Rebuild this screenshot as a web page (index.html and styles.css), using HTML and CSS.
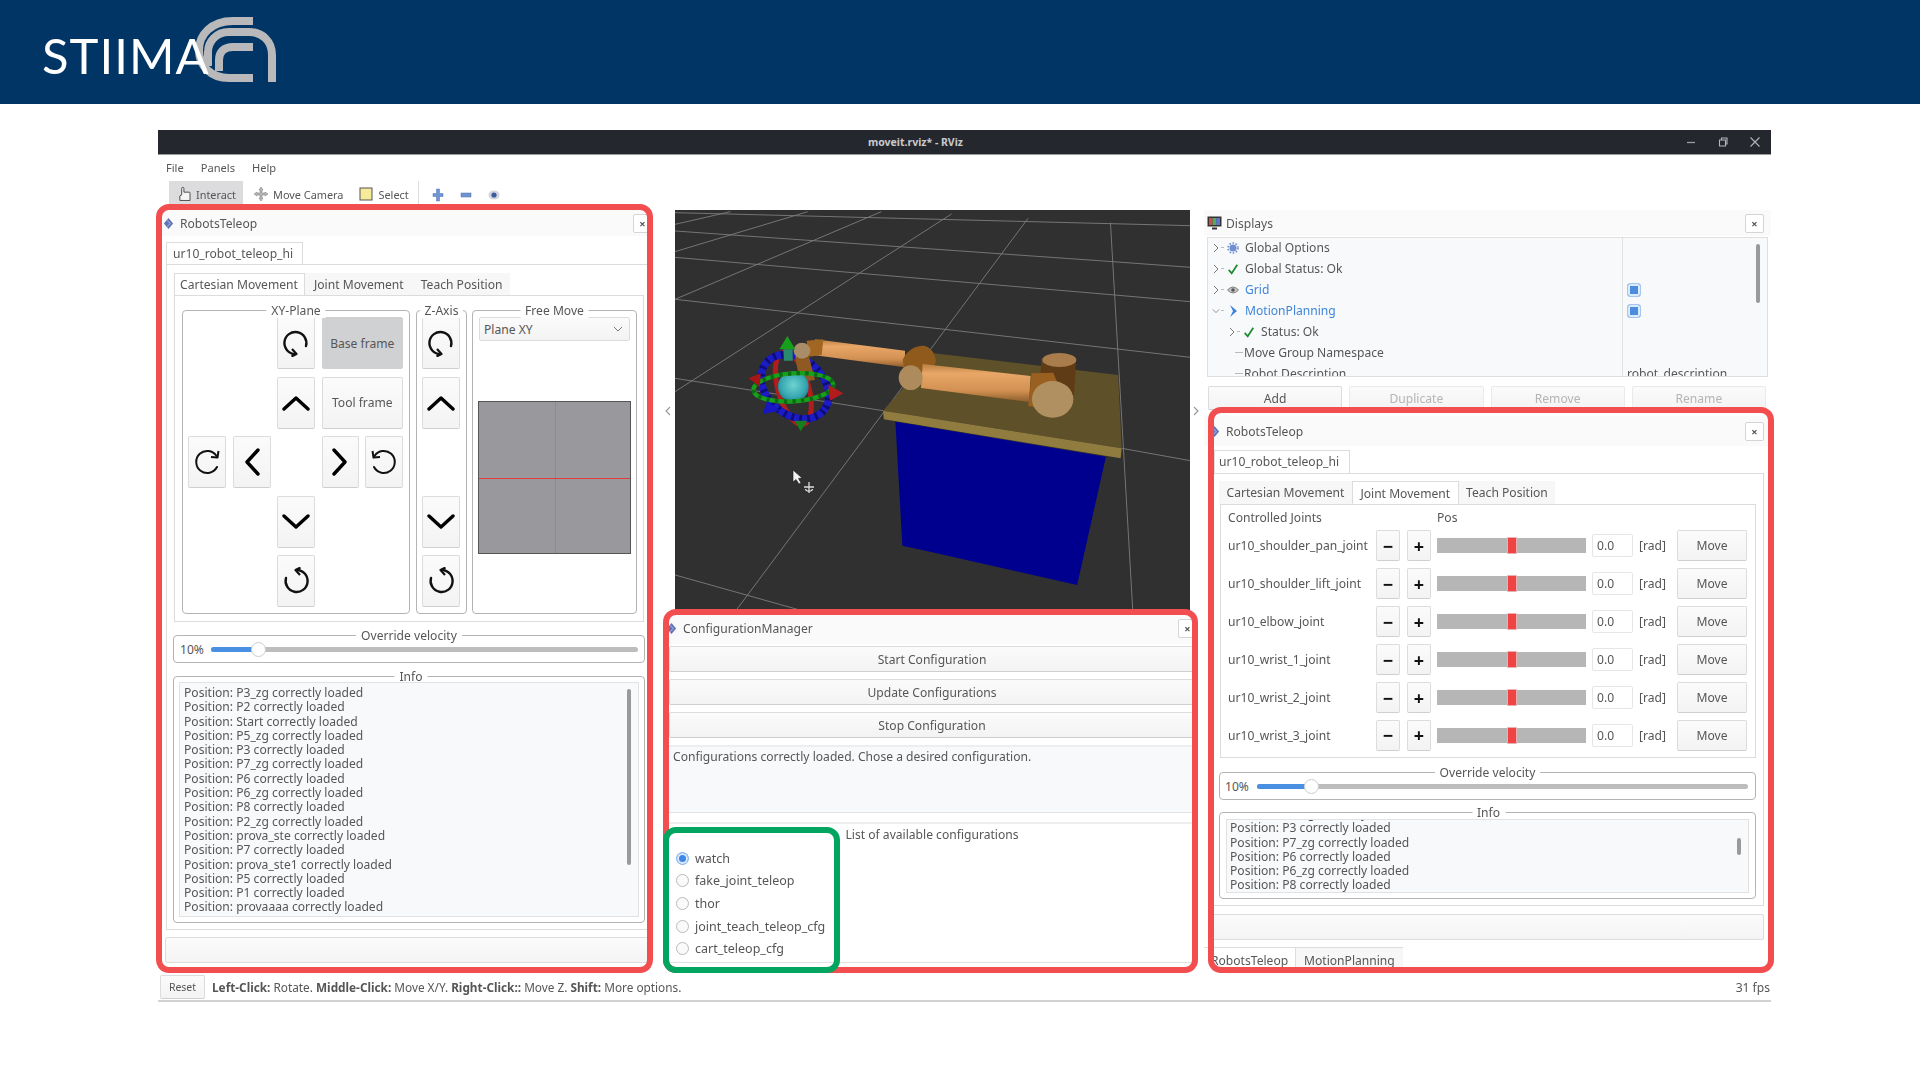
FILE: index.html
```html
<!DOCTYPE html>
<html lang="en">
<head>
<meta charset="utf-8">
<title>STIIMA - moveit.rviz - RViz</title>
<link rel="stylesheet" href="styles.css">
</head>
<body>
<svg class="defs" width="0" height="0" aria-hidden="true">
  <defs>
    <symbol id="chev" viewBox="0 0 28 16"><path d="M2 14 L14 3 L26 14" fill="none" stroke="#000" stroke-width="3.4" stroke-linecap="round" stroke-linejoin="round"/></symbol>
    <symbol id="rot-v" viewBox="0 0 28 28"><path d="M24 17 A11 11 0 1 0 13 25" fill="none" stroke="#111" stroke-width="2.4" stroke-linecap="round"/><path d="M10 20 L14.5 25 L9.5 27.5" fill="none" stroke="#111" stroke-width="2.2" stroke-linejoin="round"/></symbol>
    <symbol id="rot-h" viewBox="0 0 28 28"><path d="M24 19 A11 11 0 1 1 23.5 8" fill="none" stroke="#111" stroke-width="2" stroke-linecap="round"/><path d="M18 9 L24.5 9.5 L25.5 3" fill="none" stroke="#111" stroke-width="2" stroke-linejoin="round"/></symbol>
    <symbol id="tele" viewBox="0 0 12 14"><path d="M6 1 L11 7 L6 13 L1 7 Z" fill="#5f72b4"/><path d="M4 3 L8 7 L4 11" fill="none" stroke="#8f9fd6" stroke-width="1.4"/></symbol>
    <symbol id="exp-r" viewBox="0 0 8 10"><path d="M2 1 L6 5 L2 9" fill="none" stroke="#777" stroke-width="1"/></symbol>
    <symbol id="exp-d" viewBox="0 0 10 8"><path d="M1 2 L5 6 L9 2" fill="none" stroke="#777" stroke-width="1"/></symbol>
    <symbol id="check" viewBox="0 0 14 14"><path d="M2 8 L5.5 12 L12 2" fill="none" stroke="#1c8a2e" stroke-width="2"/></symbol>
  </defs>
</svg>

<header class="banner">
  <div class="logo">
    <span class="logo-text">STIIMA</span>
    <svg class="logo-mark" width="90" height="72" viewBox="190 14 90 72">
      <g fill="none" stroke="#b9b9bb" stroke-width="8">
        <path d="M253 21 H233 C211 21 199 35 199 50 C199 66 211 78 229 78 H253"/>
        <path d="M272 82 V55 C272 41 262 32 249 32 H229 C216 32 208 42 208 52 V66"/>
        <path d="M253 47 H233 C224 47 219 52 219 60 V71"/>
      </g>
    </svg>
  </div>
</header>

<main class="page">
  <div class="stage">
    <div class="window">
      <div class="titlebar">
        <span class="title-text">moveit.rviz* - RViz</span>
        <div class="win-controls">
          <svg width="12" height="12" viewBox="0 0 12 12"><path d="M2 6.5 H10" stroke="#9a9ca2" stroke-width="1.3"/></svg>
          <svg width="12" height="12" viewBox="0 0 12 12"><path d="M2.5 4 H8.5 V10 H2.5 Z M4.5 4 V2 H10 V8 H8.5" fill="none" stroke="#b5b6ba" stroke-width="1.1"/></svg>
          <svg width="12" height="12" viewBox="0 0 12 12"><path d="M1.5 1.5 L10.5 10.5 M10.5 1.5 L1.5 10.5" stroke="#b5b6ba" stroke-width="1.1"/></svg>
        </div>
      </div>
      <nav class="menubar"><span>File</span><span>Panels</span><span>Help</span></nav>
      <div class="toolbar">
        <div class="tool tool-active">
          <svg width="14" height="16" viewBox="0 0 14 16"><path d="M4 9 V2 a1.2 1.2 0 0 1 2.4 0 V6 H12 a1 1 0 0 1 1 1 V15 H2 V10 Z" fill="#f4f4f4" stroke="#444" stroke-width="1"/></svg>
          <span>Interact</span>
        </div>
        <div class="tool">
          <svg width="14" height="16" viewBox="0 0 14 16"><path d="M7 1 L9 4 H8 V7 H11 V6 L14 8 L11 10 V9 H8 V12 H9 L7 15 L5 12 H6 V9 H3 V10 L0 8 L3 6 V7 H6 V4 H5 Z" fill="#b8b8b8" stroke="#777" stroke-width=".5"/></svg>
          <span>Move Camera</span>
        </div>
        <div class="tool">
          <svg width="14" height="14" viewBox="0 0 14 14"><rect x="1" y="1" width="12" height="12" fill="#f7eb9a" stroke="#555" stroke-width="1"/></svg>
          <span>Select</span>
        </div>
        <div class="tool-sep"></div>
        <svg class="tool-icon" width="12" height="14" viewBox="0 0 12 14"><path d="M4.5 1 H7.5 V5.5 H11 V8.5 H7.5 V13 H4.5 V8.5 H1 V5.5 H4.5 Z" fill="#6f94d2" stroke="#4f70ad" stroke-width=".5"/></svg>
        <svg class="tool-icon" width="12" height="14" viewBox="0 0 12 14"><rect x="1" y="5" width="10" height="4" fill="#6f94d2" stroke="#4f70ad" stroke-width=".5"/></svg>
        <svg class="tool-icon" width="12" height="14" viewBox="0 0 12 14"><ellipse cx="6" cy="7" rx="5.5" ry="4.5" fill="#d4d6dc"/><circle cx="6" cy="7" r="2.6" fill="#3d5da0"/></svg>
      </div>

      <div class="main">
        <!-- Left dock -->
        <section class="dock-left">
          <div class="dock-title">
            <svg class="dock-icon" width="11" height="13"><use href="#tele"/></svg>
            <span>RobotsTeleop</span>
            <button class="close-btn">×</button>
          </div>
          <div class="tabbar tabbar-left"><div class="outer-tab">ur10_robot_teleop_hi</div></div>
          <div class="tab-pane tab-pane-left">
            <div class="inner-tabs inner-tabs-left">
              <div class="inner-tab active">Cartesian Movement</div>
              <div class="inner-tab">Joint Movement</div>
              <div class="inner-tab">Teach Position</div>
            </div>
            <div class="inner-pane cart-pane">
              <div class="group xy-group">
                <span class="legend">XY-Plane</span>
                <div class="pad-grid">
                  <button class="btn pad c3 r1"><svg width="28" height="28"><use href="#rot-v"/></svg></button>
                  <button class="btn pad frame-on c45 r1">Base frame</button>
                  <button class="btn pad c3 r2"><svg width="28" height="16"><use href="#chev"/></svg></button>
                  <button class="btn pad c45 r2">Tool frame</button>
                  <button class="btn pad c1 r3"><svg width="28" height="28"><use href="#rot-h"/></svg></button>
                  <button class="btn pad c2 r3"><svg class="point-left" width="28" height="16"><use href="#chev"/></svg></button>
                  <button class="btn pad c4 r3"><svg class="point-right" width="28" height="16"><use href="#chev"/></svg></button>
                  <button class="btn pad c5 r3"><svg class="flip-x" width="28" height="28"><use href="#rot-h"/></svg></button>
                  <button class="btn pad c3 r4"><svg class="flip-y" width="28" height="16"><use href="#chev"/></svg></button>
                  <button class="btn pad c3 r5"><svg class="turn" width="28" height="28"><use href="#rot-v"/></svg></button>
                </div>
              </div>
              <div class="group z-group">
                <span class="legend">Z-Axis</span>
                <div class="z-grid">
                  <button class="btn pad r1"><svg width="28" height="28"><use href="#rot-v"/></svg></button>
                  <button class="btn pad r2"><svg width="28" height="16"><use href="#chev"/></svg></button>
                  <button class="btn pad r4"><svg class="flip-y" width="28" height="16"><use href="#chev"/></svg></button>
                  <button class="btn pad r5"><svg class="turn" width="28" height="28"><use href="#rot-v"/></svg></button>
                </div>
              </div>
              <div class="group free-group">
                <span class="legend">Free Move</span>
                <div class="combo"><span>Plane XY</span><svg width="10" height="8"><use href="#exp-d"/></svg></div>
                <div class="free-square"><i class="axis-v"></i><i class="axis-h"></i></div>
              </div>
            </div>
            <div class="group velocity velocity-left">
              <span class="legend">Override velocity</span>
              <span class="pct">10%</span>
              <div class="slider"><div class="slider-fill fill-left"></div><div class="slider-handle handle-left"></div></div>
            </div>
            <div class="group info info-left">
              <span class="legend">Info</span>
              <div class="log log-left">
                <div>Position: P3_zg correctly loaded</div>
                <div>Position: P2 correctly loaded</div>
                <div>Position: Start correctly loaded</div>
                <div>Position: P5_zg correctly loaded</div>
                <div>Position: P3 correctly loaded</div>
                <div>Position: P7_zg correctly loaded</div>
                <div>Position: P6 correctly loaded</div>
                <div>Position: P6_zg correctly loaded</div>
                <div>Position: P8 correctly loaded</div>
                <div>Position: P2_zg correctly loaded</div>
                <div>Position: prova_ste correctly loaded</div>
                <div>Position: P7 correctly loaded</div>
                <div>Position: prova_ste1 correctly loaded</div>
                <div>Position: P5 correctly loaded</div>
                <div>Position: P1 correctly loaded</div>
                <div>Position: provaaaa correctly loaded</div>
                <i class="vbar vbar-left"></i>
              </div>
            </div>
          </div>
          <div class="empty-bar empty-left"></div>
        </section>

        <!-- Centre -->
        <section class="center">
          <div class="view-row">
            <svg class="side-arrow" width="25" height="12" viewBox="0 0 25 12"><path d="M20 2 L16 6 L20 10" fill="none" stroke="#9a9a9a" stroke-width="1.2"/></svg>
            <svg class="view" width="515" height="402" viewBox="0 0 515 402">
              <defs>
                <linearGradient id="arm" x1="0" y1="0" x2="0" y2="1">
                  <stop offset="0" stop-color="#b97f42"/><stop offset=".25" stop-color="#e8a767"/><stop offset=".7" stop-color="#d29152"/><stop offset="1" stop-color="#8d5c2c"/>
                </linearGradient>
                <radialGradient id="ball" cx=".5" cy=".45" r=".6">
                  <stop offset="0" stop-color="#6fd3d0"/><stop offset=".7" stop-color="#34a5b0"/><stop offset="1" stop-color="#1c6f80"/>
                </radialGradient>
                <filter id="soft" x="-10%" y="-10%" width="120%" height="120%"><feGaussianBlur stdDeviation="2"/></filter>
              </defs>
              <rect width="515" height="402" fill="#303030"/>
              <g transform="scale(.3509 .3333) translate(-42 -30)">
                <g fill="none" stroke="#7d7d7d" stroke-width="2.6">
                  <path d="M42 38 L1510 77"/>
                  <path d="M42 93 L680 140 L1290 185 L1510 202"/>
                  <path d="M42 172 L570 220 L1295 285 L1510 305"/>
                  <path d="M42 298 L810 388 L1510 472"/>
                  <path d="M42 535 L635 632"/>
                  <path d="M1315 745 L1510 782"/>
                  <path d="M42 1125 L390 1228"/>
                  <path d="M1283 68 L1347 1240"/>
                  <path d="M1048 55 L210 1240"/>
                  <path d="M830 42 L42 575"/>
                  <path d="M630 35 L42 298"/>
                  <path d="M420 35 L42 155"/>
                  <path d="M200 35 L42 73"/>
                </g>
                <path d="M780 460 L1305 525 L1315 745 L635 632 Z" fill="#5e5029"/>
                <path d="M635 632 L1315 745 L1312 775 L637 658 Z" fill="#917c3f"/>
                <path d="M670 665 L1270 770 L1188 1155 L690 1037 Z" fill="#00008f"/>
              </g>
              <!-- shoulder side of the arm -->
              <g transform="translate(215 120) scale(.3333)" filter="url(#soft)">
                <path d="M-225 28 L45 62 L45 112 L-225 76 Z" fill="url(#arm)"/>
                <path d="M38 90 C50 60 80 45 105 48 C130 55 140 85 136 100 L100 145 L45 125 Z" fill="#8f5a1e"/>
                <path d="M98 102 L422 138 L417 216 L93 174 Z" fill="url(#arm)"/>
                <ellipse cx="62" cy="143" rx="36" ry="37" fill="#ad8b5c"/>
                <path d="M454 85 L558 95 L552 195 L500 200 L452 130 Z" fill="#5f3a12"/>
                <ellipse cx="508" cy="90" rx="51" ry="21" fill="#a97d4c"/>
                <path d="M425 130 L490 128 L505 165 L465 234 L415 228 Z" fill="#9a6020"/>
                <ellipse cx="488" cy="208" rx="62" ry="55" fill="#b09061"/>
              </g>
              <!-- goal marker -->
              <g transform="translate(65 120) scale(.3333)" filter="url(#soft)">
                <path d="M200 32 L250 28 L245 75 L205 80 Z" fill="#a16622"/>
                <ellipse cx="160" cy="175" rx="112" ry="46" transform="rotate(74 160 175)" fill="none" stroke="#b31d1d" stroke-width="15"/>
                <ellipse cx="165" cy="170" rx="112" ry="84" transform="rotate(40 165 170)" fill="none" stroke="#1a1ac4" stroke-width="22"/>
                <ellipse cx="165" cy="170" rx="112" ry="84" transform="rotate(40 165 170)" fill="none" stroke="#0d0d7a" stroke-width="22" stroke-dasharray="8 16"/>
                <path d="M165 80 L205 72 L225 150 L180 155 Z" fill="#8f5a20"/>
                <ellipse cx="186" cy="62" rx="25" ry="24" fill="#a98d68"/>
                <circle cx="160" cy="170" r="46" fill="url(#ball)"/>
                <ellipse cx="160" cy="172" rx="120" ry="42" transform="rotate(-4 160 172)" fill="none" stroke="#17a01b" stroke-width="13"/>
                <ellipse cx="160" cy="172" rx="120" ry="42" transform="rotate(-4 160 172)" fill="none" stroke="#0d6a12" stroke-width="13" stroke-dasharray="10 16"/>
                <path d="M142 18 L166 58 L118 58 Z" fill="#14a01a"/>
                <path d="M130 58 L158 58 L158 92 L132 92 Z" fill="#2b8a70"/>
                <path d="M25 145 L62 130 L60 170 Z" fill="#a51616"/>
                <path d="M310 190 L265 165 L270 212 Z" fill="#b31d1d"/>
                <path d="M68 252 L82 212 L118 242 Z" fill="#1616c4"/>
                <path d="M182 304 L164 272 L202 272 Z" fill="#14801a"/>
              </g>
              <!-- mouse cursor -->
              <g transform="translate(118 260)">
                <path d="M0 0 V12 L3 9.5 L6 14 L8 13 L5.5 8.5 L9 8 Z" fill="#f2f2f2" stroke="#1a1a1a" stroke-width=".6"/>
                <path d="M11 17 H21 M16 12 V23 M12.5 19 C13 22 19 22 19.500 19" fill="none" stroke="#dcdcdc" stroke-width="1.3"/>
              </g>
            </svg>
            <svg class="side-arrow" width="14" height="12" viewBox="0 0 14 12"><path d="M4 2 L8 6 L4 10" fill="none" stroke="#9a9a9a" stroke-width="1.2"/></svg>
          </div>
          <div class="config">
            <div class="dock-title config-title">
              <svg class="dock-icon" width="11" height="13"><use href="#tele"/></svg>
              <span>ConfigurationManager</span>
              <button class="close-btn">×</button>
            </div>
            <button class="btn wide">Start Configuration</button>
            <button class="btn wide">Update Configurations</button>
            <button class="btn wide">Stop Configuration</button>
            <div class="config-log">Configurations correctly loaded. Chose a desired configuration.</div>
            <div class="config-list">
              <div class="config-head">List of available configurations</div>
              <div class="radio-list">
                <label class="radio-row"><i class="radio on"></i>watch</label>
                <label class="radio-row"><i class="radio"></i>fake_joint_teleop</label>
                <label class="radio-row"><i class="radio"></i>thor</label>
                <label class="radio-row"><i class="radio"></i>joint_teach_teleop_cfg</label>
                <label class="radio-row"><i class="radio"></i>cart_teleop_cfg</label>
              </div>
            </div>
          </div>
        </section>

        <!-- Right dock -->
        <section class="dock-right">
          <div class="dock-title displays-title">
            <svg class="dock-icon displays-icon" width="15" height="14" viewBox="0 0 15 14"><rect x=".5" y=".5" width="14" height="10" fill="#333"/><rect x="2" y="2" width="3.6" height="7" fill="#c94f4f"/><rect x="5.6" y="2" width="3.6" height="7" fill="#56a85a"/><rect x="9.2" y="2" width="3.8" height="7" fill="#5a78c8"/><path d="M5 12.5 H10" stroke="#333" stroke-width="2"/></svg>
            <span>Displays</span>
            <button class="close-btn">×</button>
          </div>
          <div class="tree">
            <div class="tree-row">
              <div class="tree-name"><svg class="exp" width="8" height="10"><use href="#exp-r"/></svg><i class="dash"></i><svg class="ticon" width="12" height="12" viewBox="0 0 12 12"><circle cx="6" cy="6" r="3.6" fill="#6f8fd0"/><circle cx="6" cy="6" r="5" fill="none" stroke="#6f8fd0" stroke-width="1.6" stroke-dasharray="1.6 1.6"/></svg><span>Global Options</span></div>
            </div>
            <div class="tree-row">
              <div class="tree-name"><svg class="exp" width="8" height="10"><use href="#exp-r"/></svg><i class="dash"></i><svg class="ticon" width="12" height="12"><use href="#check"/></svg><span>Global Status: Ok</span></div>
            </div>
            <div class="tree-row">
              <div class="tree-name"><svg class="exp" width="8" height="10"><use href="#exp-r"/></svg><i class="dash"></i><svg class="ticon" width="12" height="10" viewBox="0 0 12 10"><path d="M.5 5 Q6 -1 11.5 5 Q6 11 .5 5 Z" fill="#c9c9c9" stroke="#666" stroke-width=".8"/><circle cx="6" cy="5" r="1.8" fill="#555"/></svg><span class="link">Grid</span></div>
              <div class="tree-val"><i class="tick"></i></div>
            </div>
            <div class="tree-row">
              <div class="tree-name"><svg class="exp" width="8" height="8"><use href="#exp-d"/></svg><i class="dash"></i><svg class="ticon" width="12" height="14" viewBox="0 0 12 14"><path d="M3 1 L10 7 L3 13 L6 7 Z" fill="#3f80d8"/></svg><span class="link">MotionPlanning</span></div>
              <div class="tree-val"><i class="tick"></i></div>
            </div>
            <div class="tree-row">
              <div class="tree-name lvl2"><svg class="exp" width="8" height="10"><use href="#exp-r"/></svg><i class="dash"></i><svg class="ticon" width="12" height="12"><use href="#check"/></svg><span>Status: Ok</span></div>
            </div>
            <div class="tree-row">
              <div class="tree-name lvl2b"><i class="dash dash-leaf"></i><span>Move Group Namespace</span></div>
            </div>
            <div class="tree-row">
              <div class="tree-name lvl2b"><i class="dash dash-leaf"></i><span>Robot Description</span></div>
              <div class="tree-val"><span>robot_description</span></div>
            </div>
            <i class="vbar vbar-tree"></i>
          </div>
          <div class="display-btns">
            <button class="btn dbtn">Add</button>
            <button class="btn dbtn off">Duplicate</button>
            <button class="btn dbtn off">Remove</button>
            <button class="btn dbtn off">Rename</button>
          </div>

          <div class="dock-title teleop-title">
            <svg class="dock-icon" width="11" height="13"><use href="#tele"/></svg>
            <span>RobotsTeleop</span>
            <button class="close-btn">×</button>
          </div>
          <div class="tabbar tabbar-right"><div class="outer-tab">ur10_robot_teleop_hi</div></div>
          <div class="tab-pane tab-pane-right">
            <div class="inner-tabs inner-tabs-right">
              <div class="inner-tab">Cartesian Movement</div>
              <div class="inner-tab active">Joint Movement</div>
              <div class="inner-tab">Teach Position</div>
            </div>
            <div class="inner-pane joint-pane">
              <div class="joint-head"><span class="jh-name">Controlled Joints</span><span>Pos</span></div>
              <div class="joint-row"><span class="j-name">ur10_shoulder_pan_joint</span><button class="btn j-step">−</button><button class="btn j-step">+</button><div class="j-slider"><i></i></div><div class="j-val">0.0</div><span class="j-unit">[rad]</span><button class="btn j-move">Move</button></div>
              <div class="joint-row"><span class="j-name">ur10_shoulder_lift_joint</span><button class="btn j-step">−</button><button class="btn j-step">+</button><div class="j-slider"><i></i></div><div class="j-val">0.0</div><span class="j-unit">[rad]</span><button class="btn j-move">Move</button></div>
              <div class="joint-row"><span class="j-name">ur10_elbow_joint</span><button class="btn j-step">−</button><button class="btn j-step">+</button><div class="j-slider"><i></i></div><div class="j-val">0.0</div><span class="j-unit">[rad]</span><button class="btn j-move">Move</button></div>
              <div class="joint-row"><span class="j-name">ur10_wrist_1_joint</span><button class="btn j-step">−</button><button class="btn j-step">+</button><div class="j-slider"><i></i></div><div class="j-val">0.0</div><span class="j-unit">[rad]</span><button class="btn j-move">Move</button></div>
              <div class="joint-row"><span class="j-name">ur10_wrist_2_joint</span><button class="btn j-step">−</button><button class="btn j-step">+</button><div class="j-slider"><i></i></div><div class="j-val">0.0</div><span class="j-unit">[rad]</span><button class="btn j-move">Move</button></div>
              <div class="joint-row"><span class="j-name">ur10_wrist_3_joint</span><button class="btn j-step">−</button><button class="btn j-step">+</button><div class="j-slider"><i></i></div><div class="j-val">0.0</div><span class="j-unit">[rad]</span><button class="btn j-move">Move</button></div>
            </div>
            <div class="group velocity velocity-right">
              <span class="legend">Override velocity</span>
              <span class="pct">10%</span>
              <div class="slider"><div class="slider-fill fill-right"></div><div class="slider-handle handle-right"></div></div>
            </div>
            <div class="group info info-right">
              <span class="legend">Info</span>
              <div class="log log-right">
                <div class="clipped">Position: P5_zg correctly loaded</div>
                <div>Position: P3 correctly loaded</div>
                <div>Position: P7_zg correctly loaded</div>
                <div>Position: P6 correctly loaded</div>
                <div>Position: P6_zg correctly loaded</div>
                <div>Position: P8 correctly loaded</div>
                <i class="vbar vbar-right"></i>
              </div>
            </div>
          </div>
          <div class="empty-bar empty-right"></div>
          <div class="bottom-tabs">
            <div class="bottom-tab first">RobotsTeleop</div>
            <div class="bottom-tab">MotionPlanning</div>
          </div>
        </section>
      </div>

      <footer class="statusbar">
        <button class="btn reset">Reset</button>
        <span class="hint"><b>Left-Click:</b> Rotate. <b>Middle-Click:</b> Move X/Y. <b>Right-Click::</b> Move Z. <b>Shift:</b> More options.</span>
        <span class="fps">31 fps</span>
      </footer>
    </div>

    <div class="mark mark-left"></div>
    <div class="mark mark-center"></div>
    <div class="mark mark-right"></div>
    <div class="mark mark-green"></div>
  </div>
</main>
</body>
</html>
```
FILE: styles.css
```css
* { box-sizing: border-box; }
html, body { margin: 0; padding: 0; background: #fff; }
body { width: 1920px; height: 1080px; overflow: hidden; font-family: "Noto Sans", "Open Sans", sans-serif; font-size: 12.1px; color: #565656; }
.defs { position: absolute; }
button { font: inherit; color: inherit; padding: 0; margin: 0; }

/* banner */
.banner { height: 104px; background: #003566; padding-left: 43px; }
.logo { position: relative; height: 104px; width: 240px; }
.logo-text { position: absolute; z-index: 2; left: -1px; top: 26px; font-family: Lato, sans-serif; font-size: 49px; line-height: 58px; color: #fff; letter-spacing: 1px; font-weight: 400; }
.logo-mark { position: absolute; left: 147px; top: 14px; }

/* window */
.page { padding: 26px 0 0 158px; }
.stage { position: relative; width: 1613px; }
.window { width: 1613px; filter: blur(.4px); }
.titlebar { height: 25px; background: #25272f; border-bottom: 1px solid #9a9a9a; display: flex; align-items: center; justify-content: center; position: relative; }
.title-text { color: #c9cacd; font-weight: 700; font-size: 10.5px; margin-left: -98px; }
.win-controls { position: absolute; right: 10px; top: 6px; display: flex; gap: 20px; }
.menubar { height: 25px; display: flex; align-items: center; padding-left: 8px; gap: 17px; font-size: 11.1px; }
.toolbar { height: 28px; display: flex; align-items: flex-start; padding-left: 11px; font-size: 10.9px; }
.tool { height: 24px; display: flex; align-items: center; gap: 5px; padding: 2px 7px 0 9px; margin-top: 1px; }
.tool-active { background: #dcdcde; width: 74px; margin-right: 2px; }
.tool + .tool { padding-left: 9px; }
.tool-sep { width: 1px; height: 24px; background: #ddd; margin: 1px 13px 0 2px; }
.tool-icon { margin: 8px 16px 0 0; }

.main { display: flex; height: 766px; padding: 2px 0 0 2px; }

/* docks */
.dock-title { height: 26px; display: flex; align-items: center; background: #fafafa; padding-left: 3px; gap: 6px; }
.dock-icon { flex: none; }
.close-btn { margin-left: auto; width: 19px; height: 19px; border: 1px solid #d5d5d5; background: #fff; border-radius: 2px; font-size: 11px; line-height: 15px; font-weight: 700; }

.dock-left { width: 490px; flex: none; }
.dock-left .close-btn { margin-right: -2px; }
.tabbar { display: flex; }
.tabbar-left { margin: 6px 0 0 6px; height: 22px; }
.outer-tab { border: 1px solid #dcdcdc; border-bottom: 0; background: #fff; display: flex; align-items: center; white-space: nowrap; }
.tabbar-left .outer-tab { width: 137px; padding-left: 6px; }
.tab-pane { border: 1px solid #dcdcdc; background: #fff; }
.tab-pane-left { margin-left: 6px; height: 666px; padding: 8px 5px 0 7px; }

.inner-tabs { display: flex; height: 22px; }
.inner-tab { display: flex; align-items: center; padding: 0 7.5px; background: #f7f7f7; white-space: nowrap; }
.inner-tab.active { background: #fff; border: 1px solid #dcdcdc; border-bottom: 0; }
.inner-tabs-left .inner-tab { padding: 0 8px 0 9px; }
.inner-tabs-left .inner-tab.active { width: 131px; padding-left: 5px; }
.inner-pane { border: 1px solid #dcdcdc; background: #fff; }
.cart-pane { height: 327px; padding: 14px 0 0 7px; display: flex; gap: 5px; width: 470px; }

.group { position: relative; border: 1px solid #b4b4b4; border-radius: 4px; background: #fff; }
.legend { position: absolute; top: -8px; left: 50%; transform: translateX(-50%); padding: 0 5px; background: #fff; white-space: nowrap; line-height: 15px; }
.info-left .legend { left: calc(50% + 2px); }
.info-right .legend { left: calc(50% + 1px); }

.btn { background: linear-gradient(#fbfbfb, #f3f3f3); border: 1px solid #dcdcdc; border-bottom-color: #cfcfcf; border-radius: 2px; display: flex; align-items: center; justify-content: center; }

.xy-group { width: 228px; height: 304px; padding: 6px 0 0 5px; margin-right: 1px; }
.pad-grid { display: grid; grid-template-columns: 38px 38px 38px 37px 38px; grid-template-rows: repeat(5, 52px); column-gap: 6.5px; row-gap: 7.5px; }
.pad { width: 100%; height: 100%; }
.c1 { grid-column: 1; } .c2 { grid-column: 2; } .c3 { grid-column: 3; } .c4 { grid-column: 4; } .c5 { grid-column: 5; }
.c45 { grid-column: 4 / span 2; }
.r1 { grid-row: 1; } .r2 { grid-row: 2; } .r3 { grid-row: 3; } .r4 { grid-row: 4; } .r5 { grid-row: 5; }
.frame-on { background: #d0d1d3; border-color: #d0d1d3; }
.point-left { transform: rotate(-90deg); }
.point-right { transform: rotate(90deg); }
.flip-y { transform: scaleY(-1); }
.flip-x { transform: scaleX(-1); }
.turn { transform: rotate(180deg); }

.z-group { width: 51px; height: 304px; padding: 6px 0 0 5px; }
.z-grid { display: grid; grid-template-columns: 38px; grid-template-rows: repeat(5, 52px); row-gap: 7.5px; }
.free-group { width: 165px; height: 304px; padding: 6px 0 0 6px; }
.combo { width: 151px; height: 24px; background: linear-gradient(#fbfbfb, #f3f3f3); border: 1px solid #dcdcdc; border-radius: 2px; display: flex; align-items: center; justify-content: space-between; padding: 0 6px 0 4px; }
.free-square { position: relative; width: 153px; height: 153px; margin: 60px 0 0 -1px; background: #99989c; border: 1px solid #555; }
.axis-v { position: absolute; left: 76px; top: 0; bottom: 0; width: 1px; background: #3cc43c; }
.axis-h { position: absolute; top: 76px; left: 0; right: 0; height: 1px; background: #e43a3a; }

.velocity { height: 28px; display: flex; align-items: center; margin-top: 13px; }
.velocity-left { width: 472px; margin-left: -1px; padding: 0 6px 0 6px; }
.velocity-right { width: 537px; margin-left: -1px; margin-top: 14px; padding: 0 7px 0 5px; }
.pct { flex: none; width: 32px; }
.velocity-left .pct { width: 31px; }
.slider { position: relative; flex: 1; height: 5px; background: #bdbdbd; border-radius: 3px; }
.slider-fill { height: 5px; background: #4a90e2; border-radius: 3px 0 0 3px; }
.fill-left { width: 42px; } .fill-right { width: 48px; }
.slider-handle { position: absolute; top: -5px; width: 15px; height: 15px; background: #fff; border: 1px solid #ccc; border-radius: 50%; }
.handle-left { left: 40px; } .handle-right { left: 47px; }

.info { margin-top: 13px; padding: 5px; }
.info-left { width: 472px; height: 247px; margin-left: -1px; }
.info-right { width: 537px; height: 87px; margin-left: -1px; margin-top: 12px; padding: 6px 6px 5px; }
.log { position: relative; height: 100%; background: #f8f9fb; border: 1px solid #e2e2e2; overflow: hidden; line-height: 14.3px; white-space: nowrap; }
.log-left { padding: 3px 0 0 4px; }
.log-right { padding: 0 0 0 3px; }
.clipped { margin-top: -13px; }
.vbar { position: absolute; width: 4px; background: #9a9a9a; border-radius: 2px; }
.vbar-left { right: 7px; top: 6px; height: 176px; }
.vbar-right { right: 7px; top: 18px; height: 17px; }
.vbar-tree { right: 7px; top: 6px; height: 59px; }

.empty-bar { height: 26px; background: linear-gradient(#fbfbfb, #f4f4f4); border: 1px solid #dcdcdc; border-radius: 2px; }
.empty-left { margin: 7px 0 0 5px; }

/* centre */
.center { width: 554px; flex: none; }
.view-row { display: flex; align-items: center; height: 402px; }
.side-arrow { flex: none; }
.view { flex: none; }
.config { margin-left: 15px; width: 532px; background: #fff; }
.config-title { height: 32px; padding-left: 1px; gap: 6px; }
.config-title .close-btn { margin-right: 0; }
.wide { margin-left: 4px; width: 526px; height: 26px; margin-bottom: 7px; }
.config-title + .wide { margin-top: 2px; }
.config-log { margin: 1px 0 0 4px; width: 526px; height: 68px; background: #f8f9fb; border-top: 2px solid #eee; border-bottom: 1px solid #e2e2e2; padding: 2px 0 0 4px; line-height: 16px; }
.config-list { margin: 9px 0 0 4px; width: 526px; height: 141px; border-top: 2px solid #eee; border-bottom: 1px solid #e2e2e2; }
.config-head { text-align: center; margin-top: 3px; line-height: 16px; }
.radio-list { margin: 4px 0 0 7px; }
.radio-row { display: flex; align-items: center; gap: 6px; height: 22.6px; font-size: 12.5px; }
.radio { flex: none; width: 13px; height: 13px; border-radius: 50%; border: 1px solid #bbb; background: #fafafa; }
.radio.on { border: 1px solid #8db8ee; background: #3f86e6; box-shadow: inset 0 0 0 2px #dcebfb; }

/* right */
.dock-right { width: 567px; flex: none; }
.displays-title { gap: 4px; }
.dock-right .close-btn { margin-right: 7px; }
.tree { position: relative; margin: 1px 0 0 3px; width: 561px; height: 140px; background: #f8f9fb; border: 1px solid #dfdfdf; overflow: hidden; }
.tree-row { display: flex; height: 21px; align-items: center; }
.tree-row:first-child { margin-top: -1px; }
.tree-name { display: flex; align-items: center; width: 415px; height: 21px; border-right: 1px solid #e2e2e2; padding-left: 4px; }
.tree-name.lvl2 { padding-left: 20px; }
.tree-name.lvl2b { padding-left: 27px; }
.exp { flex: none; }
.dash { width: 3px; height: 1px; background: #bbb; margin: 0 3px 0 1px; flex: none; }
.dash-leaf { width: 8px; margin: 0 1px 0 0; }
.ticon { flex: none; margin-right: 6px; }
.link { color: #3f86d8; }
.tree-val { padding-left: 4px; display: flex; align-items: center; white-space: nowrap; }
.tick { width: 14px; height: 14px; border: 1px solid #a6c6ee; border-radius: 3px; background: #4c8ddd; box-shadow: inset 0 0 0 2px #dcebfb; }
.display-btns { display: flex; gap: 7px; margin: 9px 0 0 4px; width: 558px; height: 24px; }
.dbtn { flex: 1; }
.dbtn.off { color: #b5b5b5; border-color: #eaeaea; }

.teleop-title { margin-top: 6px; height: 30px; padding-left: 5px; gap: 6px; }
.tabbar-right { margin: 4px 0 0 10px; height: 23px; }
.tabbar-right .outer-tab { width: 136px; padding: 0 0 2px 4px; }
.tab-pane-right { margin-left: 8px; width: 552px; height: 433px; padding: 7px 0 0 7px; }
.inner-tabs-right { height: 23px; margin-left: -1px; }
.joint-pane { width: 536px; height: 254px; padding: 6px 0 0 7px; }
.joint-head { display: flex; height: 16px; align-items: flex-start; line-height: 14px; }
.jh-name { width: 209px; }
.joint-row { display: flex; align-items: center; height: 37.9px; }
.j-name { width: 148px; flex: none; white-space: nowrap; }
.j-step { width: 24px; height: 31px; margin-right: 7px; font-size: 18px; font-weight: 700; color: #111; line-height: 1; flex: none; }
.j-slider { position: relative; width: 149px; height: 15px; margin-left: -1px; background: #b6b6b6; flex: none; }
.j-slider i { position: absolute; left: 70px; top: -1px; width: 10px; height: 17px; background: #f04343; border: 1px solid #e8b0b0; border-radius: 1px; }
.j-val { width: 41px; height: 23px; margin-left: 6px; border: 1px solid #e6e6e6; border-radius: 2px; background: #fff; display: flex; align-items: center; padding-left: 4px; flex: none; }
.j-unit { width: 38px; margin-left: 6px; flex: none; }
.j-move { width: 70px; height: 31px; flex: none; }
.empty-right { margin: 8px 0 0 8px; width: 552px; }
.bottom-tabs { display: flex; margin-top: 7px; height: 23px; }
.bottom-tab { display: flex; align-items: center; padding: 2px 8px 0; background: #f7f7f7; border-top: 1px solid #ddd; white-space: nowrap; }
.bottom-tab.first { background: #fff; padding-left: 7px; width: 92px; border-right: 1px solid #ddd; }

/* status */
.statusbar { height: 28px; border-bottom: 2px solid #d2d2d2; display: flex; align-items: flex-start; padding-left: 2px; }
.reset { width: 45px; height: 24px; margin-top: 1px; font-size: 10.5px; }
.hint { margin: 5px 0 0 7px; font-size: 11.8px; }
.fps { margin: 5px 1px 0 auto; }

/* call-out frames drawn over the screenshot */
.mark { position: absolute; border: 6px solid #f24e50; border-radius: 13px; pointer-events: none; }
.mark-left { left: -2px; top: 74px; width: 497px; height: 769px; }
.mark-center { left: 505px; top: 479px; width: 535px; height: 364px; }
.mark-right { left: 1050px; top: 277px; width: 566px; height: 566px; }
.mark-green { left: 505px; top: 697px; width: 177px; height: 146px; border-color: #02a55f; }
```
